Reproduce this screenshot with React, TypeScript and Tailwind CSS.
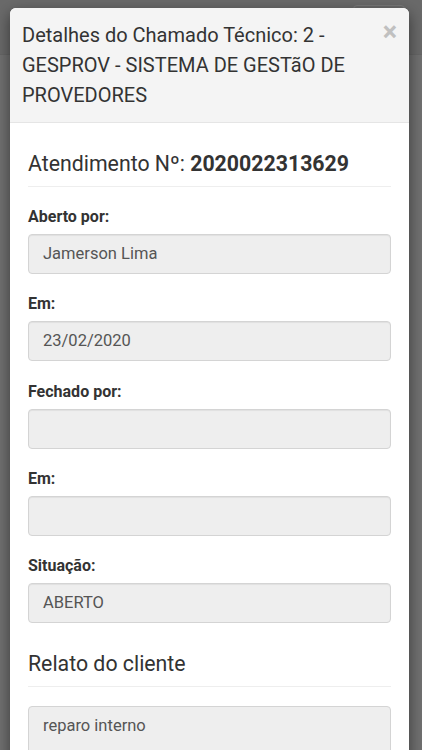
import React from "react";

const font = { fontFamily: "Roboto, 'Noto Sans', sans-serif" };

function Field({ label, value }: { label: string; value?: string }) {
  return (
    <div className="mb-[19.25px]">
      <div className="h-[21px] text-[16px] leading-[21px] font-bold text-[#333] mb-[7px]">
        {label}
      </div>
      <div className="h-10 rounded-[4px] border border-[#d4d4d4] bg-[#eeeeee] px-[14px] text-[16.5px] leading-[38px] text-[#555] shadow-[inset_0_1px_1px_rgba(0,0,0,0.06)]">
        {value}
      </div>
    </div>
  );
}

function SectionTitle({ children }: { children: React.ReactNode }) {
  return (
    <div className="border-b border-[#eeeeee] pb-[9px] mb-[19px]">
      <h3 className="text-[21.3px] leading-[26px] text-[#333]">{children}</h3>
    </div>
  );
}

export default function App() {
  return (
    <div
      className="relative h-[750px] w-[422px] overflow-hidden bg-[#717171]"
      style={font}
    >
      {/* page behind the overlay */}
      <div className="absolute inset-x-0 top-0 h-[55px] border-b border-[#666] bg-[#6a6a6a]">
        <div className="absolute right-[17px] top-[5px] h-[40px] w-[52px] rounded-[4px] border border-[#7a7a7a]" />
      </div>

      {/* modal */}
      <div className="relative mx-[10px] mt-[8px] w-[399px] rounded-[6px] bg-white shadow-[0_5px_15px_rgba(0,0,0,0.5)]">
        <div className="flex items-start rounded-t-[6px] border-b border-[#e5e5e5] bg-[#f4f4f4] px-3 py-3">
          <h4 className="flex-1 text-[20px] leading-[30px] text-[#333]">
            Detalhes do Chamado Técnico: 2 - GESPROV - SISTEMA DE GESTãO DE
            PROVEDORES
          </h4>
          <button className="ml-1 mt-[-3px] text-[27px] font-bold leading-[30px] text-[#c0c0c0]">
            ×
          </button>
        </div>

        <div className="px-[18px] pt-[28px]">
          <SectionTitle>
            Atendimento Nº: <span className="font-bold">2020022313629</span>
          </SectionTitle>

          <Field label="Aberto por:" value="Jamerson Lima" />
          <Field label="Em:" value="23/02/2020" />
          <Field label="Fechado por:" />
          <Field label="Em:" />
          <Field label="Situação:" value="ABERTO" />

          <div className="pt-[9px]">
            <SectionTitle>Relato do cliente</SectionTitle>
          </div>

          <div className="h-[100px] rounded-[4px] border border-[#d4d4d4] bg-[#eeeeee] px-[14px] py-[9px] text-[16.5px] leading-[20px] text-[#555]">
            reparo interno
          </div>
        </div>
      </div>
    </div>
  );
}
